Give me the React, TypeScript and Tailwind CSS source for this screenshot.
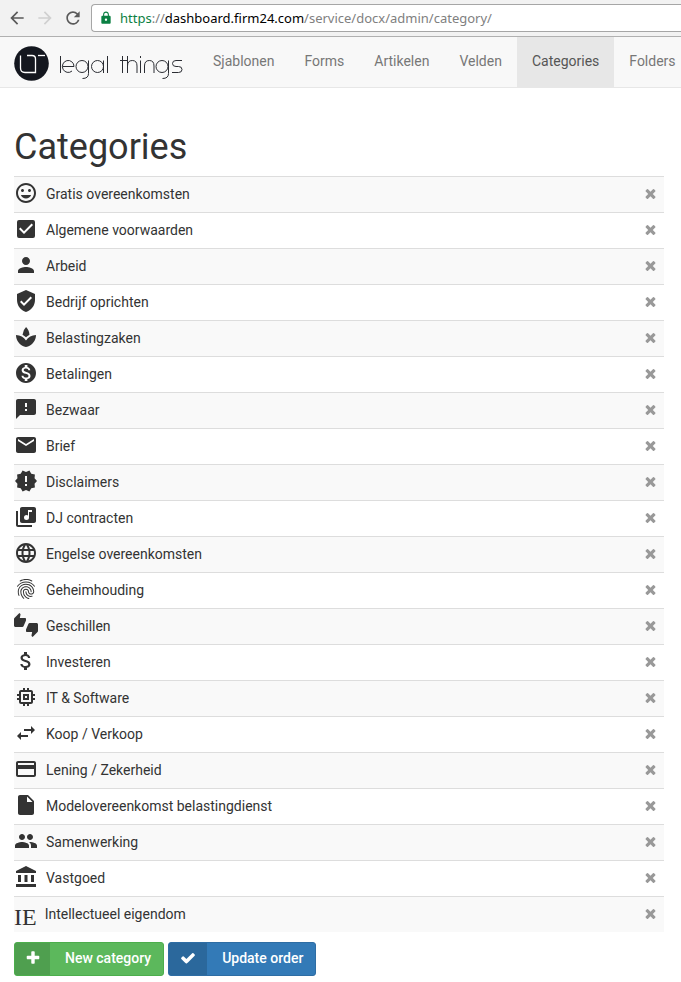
import { type ReactNode } from "react";
import type { IconType } from "react-icons";
import {
  MdAccountBalance,
  MdArrowBack,
  MdArrowForward,
  MdAttachMoney,
  MdCheckBox,
  MdCreditCard,
  MdEmail,
  MdFeedback,
  MdFingerprint,
  MdGroup,
  MdInsertDriveFile,
  MdLanguage,
  MdLibraryMusic,
  MdLock,
  MdMemory,
  MdMonetizationOn,
  MdNewReleases,
  MdPerson,
  MdRefresh,
  MdSpa,
  MdSwapHoriz,
  MdTagFaces,
  MdThumbsUpDown,
  MdVerifiedUser,
} from "react-icons/md";

type Category = { name: string; icon?: IconType };

const categories: Category[] = [
  { name: "Gratis overeenkomsten", icon: MdTagFaces },
  { name: "Algemene voorwaarden", icon: MdCheckBox },
  { name: "Arbeid", icon: MdPerson },
  { name: "Bedrijf oprichten", icon: MdVerifiedUser },
  { name: "Belastingzaken", icon: MdSpa },
  { name: "Betalingen", icon: MdMonetizationOn },
  { name: "Bezwaar", icon: MdFeedback },
  { name: "Brief", icon: MdEmail },
  { name: "Disclaimers", icon: MdNewReleases },
  { name: "DJ contracten", icon: MdLibraryMusic },
  { name: "Engelse overeenkomsten", icon: MdLanguage },
  { name: "Geheimhouding", icon: MdFingerprint },
  { name: "Geschillen", icon: MdThumbsUpDown },
  { name: "Investeren", icon: MdAttachMoney },
  { name: "IT & Software", icon: MdMemory },
  { name: "Koop / Verkoop", icon: MdSwapHoriz },
  { name: "Lening / Zekerheid", icon: MdCreditCard },
  { name: "Modelovereenkomst belastingdienst", icon: MdInsertDriveFile },
  { name: "Samenwerking", icon: MdGroup },
  { name: "Vastgoed", icon: MdAccountBalance },
  { name: "Intellectueel eigendom" },
];

const navItems = ["Sjablonen", "Forms", "Artikelen", "Velden", "Categories", "Folders"];

const glyphs = {
  times:
    "M1490 1322q0 40-28 68l-136 136q-28 28-68 28t-68-28l-294-294-294 294q-28 28-68 28t-68-28l-136-136q-28-28-28-68t28-68l294-294-294-294q-28-28-28-68t28-68l136-136q28-28 68-28t68 28l294 294 294-294q28-28 68-28t68 28l136 136q28 28 28 68t-28 68l-294 294 294 294q28 28 28 68z",
  plus: "M1600 736v192q0 40-28 68t-68 28h-416v416q0 40-28 68t-68 28h-192q-40 0-68-28t-28-68v-416h-416q-40 0-68-28t-28-68v-192q0-40 28-68t68-28h416v-416q0-40 28-68t68-28h192q40 0 68 28t28 68v416h416q40 0 68 28t28 68z",
  check:
    "M1671 566q0 40-28 68l-724 724-136 136q-28 28-68 28t-68-28l-136-136-362-362q-28-28-28-68t28-68l136-136q28-28 68-28t68 28l294 295 656-657q28-28 68-28t68 28l136 136q28 28 28 68z",
};

function Glyph({ name, className }: { name: keyof typeof glyphs; className: string }) {
  return (
    <svg viewBox="0 0 1792 1792" className={className} fill="currentColor" aria-hidden="true">
      <path d={glyphs[name]} />
    </svg>
  );
}

function BrowserBar() {
  return (
    <div className="flex h-[37px] items-center border-b border-[#b0b0b0] bg-[#f2f2f2] pl-[7px] text-[#5a5a5a]">
      <button type="button" aria-label="Back">
        <MdArrowBack className="size-5" />
      </button>
      <button type="button" aria-label="Forward" className="ml-2 text-[#d0d0d0]" disabled>
        <MdArrowForward className="size-5" />
      </button>
      <button type="button" aria-label="Reload" className="ml-2">
        <MdRefresh className="size-5" />
      </button>
      <div className="ml-2 flex h-7 flex-1 items-center rounded-l-sm border border-r-0 border-[#a6a6a6] bg-white pl-[7px]">
        <MdLock className="size-3.5 text-[#0b8043]" />
        <p className="ml-[7px] font-['Noto_Sans',sans-serif] text-[13px] whitespace-nowrap text-[#808080]">
          <span className="text-[#0b8043]">https</span>://
          <span className="text-black">dashboard.firm24.com</span>/service/docx/admin/category/
        </p>
      </div>
    </div>
  );
}

function Logo() {
  return (
    <svg viewBox="0 0 170 38" className="h-[38px] w-[170px] shrink-0" role="img" aria-label="legal things" fill="none">
      <circle cx="17.5" cy="20.5" r="17.3" fill="#14171f" />
      <g stroke="#fff" strokeWidth="1.3">
        <path d="M6.500 12.500V25q0 4.500 4.500 4.500H21.500V16q0-3.500-3.500-3.500H13" />
        <path d="M24 12.500h7" />
      </g>
      <g stroke="#2b2d33" strokeWidth="1">
        <path d="M46.500 13v17" />
        <path d="M48.500 23.500H60a5.800 6 0 1 0-2 4.500" />
        <circle cx="68" cy="23.500" r="6" />
        <path d="M74.500 17.500v13q0 5-6 5" />
        <circle cx="83.500" cy="23.500" r="6" />
        <path d="M89.500 17.500V30M93.500 13v17" />
        <path d="M108.500 13v17M106 17.500h8" />
        <path d="M113.500 13v17M113.500 23q0-5.500 4.800-5.500t4.700 5.500v7" />
        <path d="M126.500 17.500V30M126.500 13v2" />
        <path d="M130.500 30v-7q0-5.500 4.800-5.500t4.700 5.500v7" />
        <circle cx="148" cy="23.500" r="6" />
        <path d="M154.500 17.500v13q0 5-6 5" />
        <path d="M168 17.500h-6q-3.500 0-3.500 3t3.500 3h2.500q3.500 0 3.500 3t-3.500 3h-6.500" />
      </g>
    </svg>
  );
}

function Navbar() {
  return (
    <header className="flex h-[51px] items-stretch overflow-hidden border-b border-[#e7e7e7] bg-[#f8f8f8] pl-3.5">
      <a href="#home" className="mr-3.5 flex items-center">
        <Logo />
      </a>
      <nav className="flex text-sm text-[#777]">
        {navItems.map((item) => (
          <a
            key={item}
            href={`#${item.toLowerCase()}`}
            className={`flex items-center px-[15px] pb-0.5 ${item === "Categories" ? "bg-[#e7e7e7] text-[#555]" : ""}`}
          >
            {item}
          </a>
        ))}
      </nav>
    </header>
  );
}

function ActionButton({
  glyph,
  className,
  iconClassName,
  children,
}: {
  glyph: keyof typeof glyphs;
  className: string;
  iconClassName: string;
  children: ReactNode;
}) {
  return (
    <button type="button" className={`flex h-[34px] rounded-[3px] border text-sm font-medium text-white ${className}`}>
      <span className={`flex h-full items-center justify-center pb-0.5 ${iconClassName}`}>
        <Glyph name={glyph} className="size-4" />
      </span>
      <span className="self-center pr-3 pb-0.5 pl-[15px]">{children}</span>
    </button>
  );
}

export default function App() {
  return (
    <div className="bg-white font-[Roboto,sans-serif] text-sm text-[#333]">
      <BrowserBar />
      <Navbar />
      <main className="pt-[39px] pr-[17px] pl-3.5">
        <h1 className="mb-[9px] text-4xl">Categories</h1>
        <table className="w-full border-separate border-spacing-0">
          <tbody>
            {categories.map(({ name, icon: Icon }) => (
              <tr key={name} className="h-9 odd:bg-[#f9f9f9]">
                <td className="border-t border-[#ddd] p-0">
                  <div className="flex items-center">
                    {Icon ? (
                      <Icon className="mr-2 mb-1 size-6" aria-hidden="true" />
                    ) : (
                      <span className="mt-1 mr-2 font-['Liberation_Serif',serif] text-2xl leading-6">IE</span>
                    )}
                    <span className="pb-0.5">{name}</span>
                  </div>
                </td>
                <td className="w-10 border-t border-[#ddd] p-0 pb-0.5">
                  <button type="button" aria-label={`Delete ${name}`} className="mr-1.5 ml-auto block text-[#999]">
                    <Glyph name="times" className="size-[15px]" />
                  </button>
                </td>
              </tr>
            ))}
          </tbody>
        </table>
        <div className="flex gap-1 py-2.5">
          <ActionButton glyph="plus" className="border-[#4cae4c] bg-[#5cb85c]" iconClassName="w-[35px] bg-[#4f9f4f]">
            New category
          </ActionButton>
          <ActionButton glyph="check" className="border-[#2e6da4] bg-[#337ab7]" iconClassName="w-[38px] bg-[#2b689c]">
            Update order
          </ActionButton>
        </div>
      </main>
    </div>
  );
}
